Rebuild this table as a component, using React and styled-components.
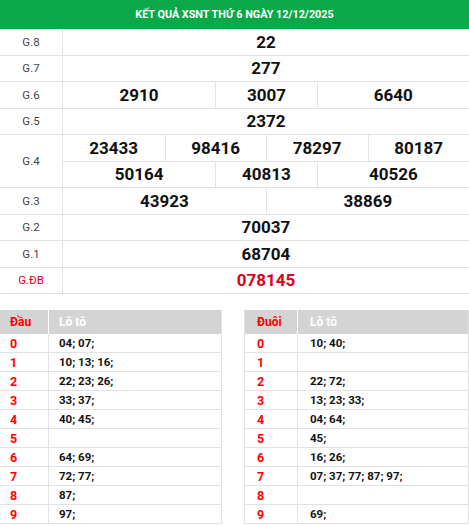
import styled, { createGlobalStyle } from "styled-components";

const GlobalStyle = createGlobalStyle`
  body {
    margin: 0;
    background: #fff;
    font-family: Roboto, "Liberation Sans", Arial, sans-serif;
  }
`;

const Page = styled.div`
  width: 469px;
`;

const Title = styled.div`
  height: 29px;
  background: #0ba84a;
  color: #fff;
  font-weight: 700;
  font-size: 10.8px;
  display: flex;
  align-items: center;
  justify-content: center;
`;

const Row = styled.div`
  display: grid;
  grid-template-columns: 63px 1fr;
  border-bottom: 1px solid #e2e2e2;
`;

const Label = styled.div`
  border-right: 1px solid #e2e2e2;
  display: flex;
  align-items: center;
  justify-content: center;
  font-size: 11.5px;
  color: ${(p) => (p.special ? "#e0001b" : "#444")};
`;

const Lines = styled.div`
  display: flex;
  flex-direction: column;
`;

const Line = styled.div`
  display: grid;
  grid-template-columns: ${(p) => p.cols || "1fr"};
  height: 25.5px;
  & + & {
    border-top: 1px solid #e2e2e2;
  }
`;

const Num = styled.div`
  display: flex;
  align-items: center;
  justify-content: center;
  font-weight: 700;
  font-size: 17px;
  color: ${(p) => (p.special ? "#e0001b" : "#111")};
  & + & {
    border-left: 1px solid #e2e2e2;
  }
`;

const Lower = styled.div`
  margin-top: 16px;
  display: flex;
  justify-content: space-between;
`;

const Loto = styled.div`
  width: ${(p) => p.w}px;
  border-left: ${(p) => (p.edge ? "1px solid #e2e2e2" : "none")};
`;

const LotoRow = styled.div`
  display: grid;
  grid-template-columns: ${(p) => p.first}px 1fr;
  height: ${(p) => (p.head ? 24 : 18)}px;
  background: ${(p) => (p.head ? "#d4d4d4" : "#fff")};
  border-bottom: ${(p) => (p.head ? "none" : "1px solid #e2e2e2")};
  border-right: 1px solid #e2e2e2;
`;

const Key = styled.div`
  display: flex;
  align-items: center;
  padding-left: ${(p) => p.pad}px;
  color: #f00;
  font-weight: 700;
  font-size: ${(p) => (p.head ? 12 : 12.5)}px;
  border-right: 1px solid ${(p) => (p.head ? "#fff" : "#e2e2e2")};
`;

const Vals = styled.div`
  display: flex;
  align-items: center;
  padding-left: ${(p) => p.pad}px;
  font-weight: 700;
  font-size: ${(p) => (p.head ? 12 : 11.5)}px;
  color: ${(p) => (p.head ? "#fff" : "#111")};
`;

const prizes = [
  { label: "G.8", lines: [["22"]] },
  { label: "G.7", lines: [["277"]] },
  { label: "G.6", lines: [["2910", "3007", "6640"]], cols: "1.5fr 1fr 1.5fr" },
  { label: "G.5", lines: [["2372"]] },
  {
    label: "G.4",
    lines: [
      ["23433", "98416", "78297", "80187"],
      ["50164", "40813", "40526"],
    ],
    cols: ["1fr 1fr 1fr 1fr", "1.5fr 1fr 1.5fr"],
  },
  { label: "G.3", lines: [["43923", "38869"]], cols: "1fr 1fr" },
  { label: "G.2", lines: [["70037"]] },
  { label: "G.1", lines: [["68704"]] },
  { label: "G.ĐB", lines: [["078145"]], special: true },
];

const dau = ["04; 07;", "10; 13; 16;", "22; 23; 26;", "33; 37;", "40; 45;", "", "64; 69;", "72; 77;", "87;", "97;"];
const duoi = ["10; 40;", "", "22; 72;", "13; 23; 33;", "04; 64;", "45;", "16; 26;", "07; 37; 77; 87; 97;", "", "69;"];

function LotoTable({ title, data, first, w, edge, pad }) {
  return (
    <Loto w={w} edge={edge}>
      <LotoRow head first={first}>
        <Key head pad={pad}>{title}</Key>
        <Vals head pad={pad}>Lô tô</Vals>
      </LotoRow>
      {data.map((v, i) => (
        <LotoRow key={i} first={first}>
          <Key pad={pad}>{i}</Key>
          <Vals pad={pad}>{v}</Vals>
        </LotoRow>
      ))}
    </Loto>
  );
}

export default function App() {
  return (
    <Page>
      <GlobalStyle />
      <Title>KẾT QUẢ XSNT THỨ 6 NGÀY 12/12/2025</Title>
      {prizes.map((p) => (
        <Row key={p.label}>
          <Label special={p.special}>{p.label}</Label>
          <Lines>
            {p.lines.map((line, i) => (
              <Line key={i} cols={Array.isArray(p.cols) ? p.cols[i] : p.cols}>
                {line.map((n) => (
                  <Num key={n} special={p.special}>{n}</Num>
                ))}
              </Line>
            ))}
          </Lines>
        </Row>
      ))}
      <Lower>
        <LotoTable title="Đầu" data={dau} first={49} w={222} pad={10} />
        <LotoTable title="Đuôi" data={duoi} first={53} w={224} edge pad={12} />
      </Lower>
    </Page>
  );
}
